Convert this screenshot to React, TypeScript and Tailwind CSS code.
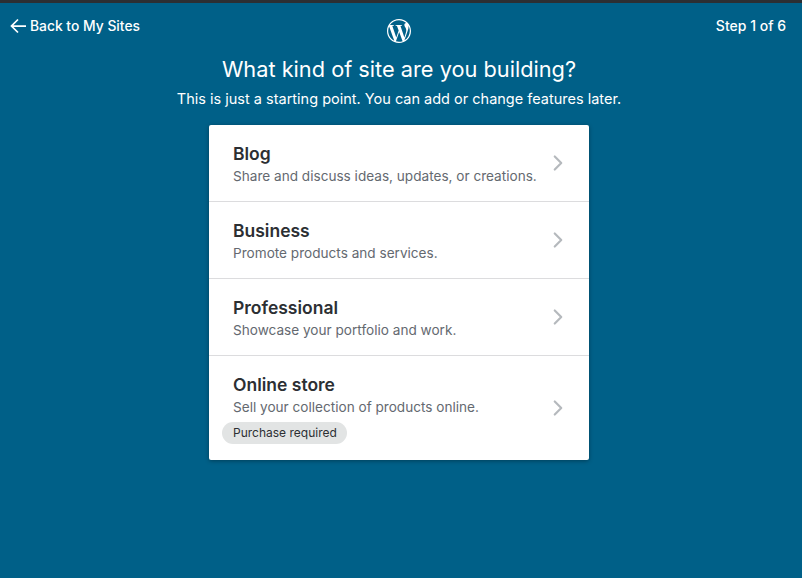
import React from 'react';
import { ChevronRight } from 'lucide-react';
import { SiWordpress } from 'react-icons/si';

const siteTypes = [
    { title: 'Blog', description: 'Share and discuss ideas, updates, or creations.' },
    { title: 'Business', description: 'Promote products and services.' },
    { title: 'Professional', description: 'Showcase your portfolio and work.' },
    { title: 'Online store', description: 'Sell your collection of products online.', badge: 'Purchase required' },
];

export default function App() {
    return (
        <div className="h-[578px] overflow-hidden bg-[#006088] border-t-[3px] border-[#2c2f33] font-['Inter','Liberation_Sans',sans-serif] text-white">
            {/* Header */}
            <div className="grid grid-cols-[1fr_auto_1fr] items-start pl-[12px] pr-[16px] h-[45px]">
                <div className="flex items-center h-[16px] mt-[15px] ml-[-2px] gap-[4px]">
                    <svg width="16" height="16" viewBox="0 0 16 16" fill="none" stroke="currentColor" strokeWidth="1.75">
                        <path d="M16 8H1.5M8 1.5L1.5 8L8 14.5" />
                    </svg>
                    <span className="text-[13.85px] font-medium leading-none mt-[2px]">Back to My Sites</span>
                </div>
                <SiWordpress className="h-[24px] w-[24px] mt-[16px]" />
                <div className="text-[14px] font-medium leading-none mt-[16px] text-right">Step 1 of 6</div>
            </div>

            <div className="flex flex-col items-center pr-[4px]">
                <h1 className="text-[21.75px] leading-[28px] font-normal mt-[7px]">What kind of site are you building?</h1>
                <p className="text-[14.5px] leading-[20px] mt-[6px]">This is just a starting point. You can add or change features later.</p>

                <div className="w-[380px] mt-[16px] bg-white rounded-[2px] shadow-[0_1px_4px_rgba(0,0,0,0.35)]">
                    {siteTypes.map((site, i) => (
                        <div
                            key={site.title}
                            className={`relative flex items-center justify-between pl-[24px] pr-[21px] ${i < 3 ? 'h-[77px] border-b border-[#dcdcde]' : 'h-[104px]'}`}
                        >
                            <div className={site.badge ? 'mt-[-26px]' : 'mt-[2px]'}>
                                <div className="text-[17.5px] leading-[22px] font-semibold text-[#2c2f33]">{site.title}</div>
                                <div className="text-[13.6px] leading-[20px] text-[#646970] mt-[1px]">{site.description}</div>
                            </div>
                            <ChevronRight className="h-[26px] w-[26px] text-[#b5b9bd] mr-[-3px] shrink-0" strokeWidth={2} />
                            {site.badge && (
                                <span className="absolute left-[13px] top-[66px] h-[22px] flex items-center pl-[11px] pr-[10px] rounded-full bg-[#e2e4e4] text-[#2c2f33] text-[12px] leading-none">
                                    {site.badge}
                                </span>
                            )}
                        </div>
                    ))}
                </div>
            </div>
        </div>
    );
}
